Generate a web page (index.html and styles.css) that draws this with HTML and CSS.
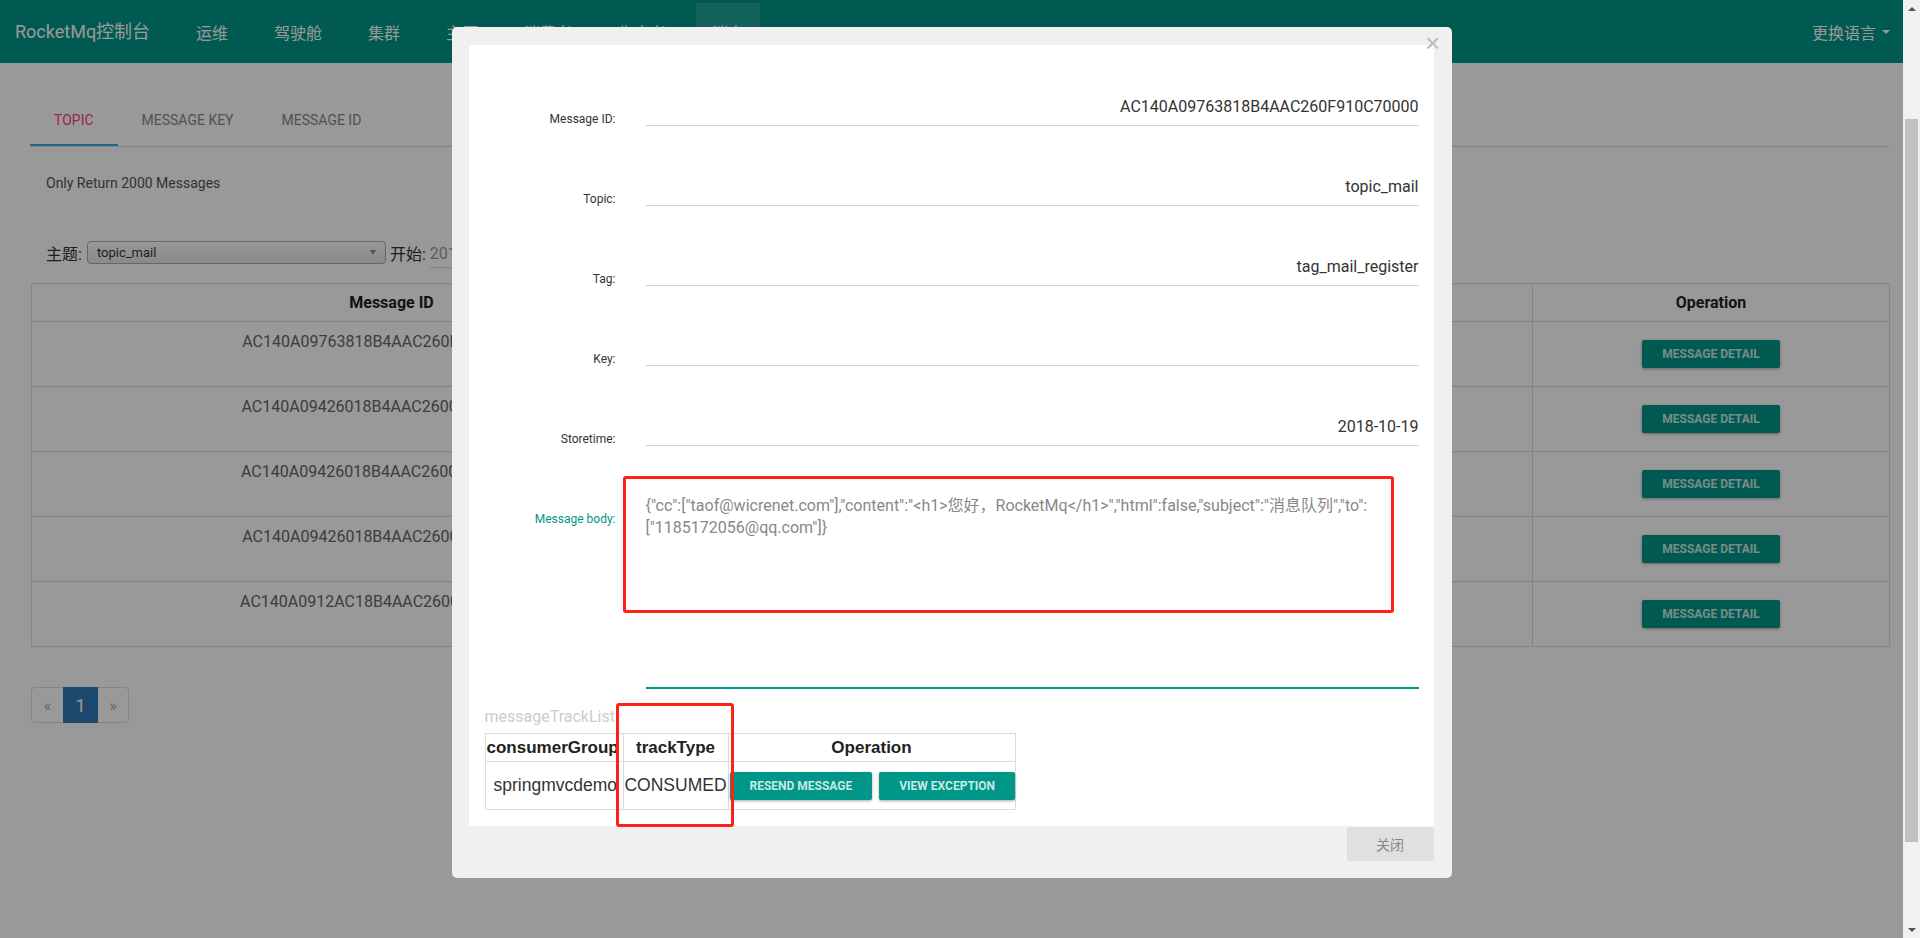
FILE: index.html
```html
<!DOCTYPE html>
<html lang="zh-CN">
<head>
<meta charset="utf-8">
<title>RocketMq控制台</title>
<link rel="stylesheet" href="styles.css">
</head>
<body>
<div class="screen">
  <div class="page">
    <nav class="navbar">
      <div class="brand">RocketMq控制台</div>
      <ul class="nav">
        <li>运维</li>
        <li>驾驶舱</li>
        <li>集群</li>
        <li>主题</li>
        <li>消费者</li>
        <li>生产者</li>
        <li class="active">消息</li>
      </ul>
      <div class="lang">更换语言<span class="caret"></span></div>
    </nav>

    <div class="content">
      <div class="tabs">
        <div class="tab active">Topic</div>
        <div class="tab">Message Key</div>
        <div class="tab">Message ID</div>
      </div>
      <p class="hint">Only Return 2000 Messages</p>
      <div class="search">
        <span class="lbl">主题:</span>
        <div class="select"><span>topic_mail</span><span class="sel-arrow"></span></div>
        <span class="lbl">开始:</span>
        <div class="date">2018-10-19 00:00:00</div>
      </div>

      <table class="msg-table">
        <colgroup>
          <col class="c-id"><col class="c-tag"><col class="c-key"><col class="c-time"><col class="c-op">
        </colgroup>
        <thead>
          <tr><th>Message ID</th><th>Tag</th><th>Message Key</th><th>StoreTime</th><th>Operation</th></tr>
        </thead>
        <tbody>
          <tr><td class="txt">AC140A09763818B4AAC260F910C70000</td><td class="txt">tag_mail_register</td><td class="txt"></td><td class="txt">2018-10-19 10:32:08</td><td class="op"><button class="btn">Message Detail</button></td></tr>
          <tr><td class="txt">AC140A09426018B4AAC2600A8C510000</td><td class="txt">tag_mail_register</td><td class="txt"></td><td class="txt">2018-10-19 09:58:41</td><td class="op"><button class="btn">Message Detail</button></td></tr>
          <tr><td class="txt">AC140A09426018B4AAC2600A8C2B0000</td><td class="txt">tag_mail_register</td><td class="txt"></td><td class="txt">2018-10-19 09:57:12</td><td class="op"><button class="btn">Message Detail</button></td></tr>
          <tr><td class="txt">AC140A09426018B4AAC2600A87F60000</td><td class="txt">tag_mail_register</td><td class="txt"></td><td class="txt">2018-10-19 09:55:30</td><td class="op"><button class="btn">Message Detail</button></td></tr>
          <tr><td class="txt">AC140A0912AC18B4AAC2600A73D10000</td><td class="txt">tag_mail_register</td><td class="txt"></td><td class="txt">2018-10-19 09:50:02</td><td class="op"><button class="btn">Message Detail</button></td></tr>
        </tbody>
      </table>

      <ul class="pagination">
        <li class="pg-prev">«</li>
        <li class="pg-num active">1</li>
        <li class="pg-next">»</li>
      </ul>
    </div>

    <div class="overlay">
      <div class="dialog">
        <div class="panel">
          <div class="form">
            <div class="row">
              <label>Message ID:</label>
              <div class="field"><div class="input">AC140A09763818B4AAC260F910C70000</div></div>
            </div>
            <div class="row">
              <label>Topic:</label>
              <div class="field"><div class="input">topic_mail</div></div>
            </div>
            <div class="row">
              <label>Tag:</label>
              <div class="field"><div class="input">tag_mail_register</div></div>
            </div>
            <div class="row">
              <label>Key:</label>
              <div class="field"><div class="input"></div></div>
            </div>
            <div class="row">
              <label>Storetime:</label>
              <div class="field"><div class="input">2018-10-19</div></div>
            </div>
            <div class="row">
              <label class="focus">Message body:</label>
              <div class="field"><div class="textarea">{"cc":["taof@wicrenet.com"],"content":"&lt;h1&gt;您好，RocketMq&lt;/h1&gt;","html":false,"subject":"消息队列","to":<br>["1185172056@qq.com"]}</div></div>
            </div>
          </div>

          <div class="track">
            <div class="track-title">messageTrackList</div>
            <table class="track-table">
              <colgroup><col class="t-group"><col class="t-type"><col class="t-op"></colgroup>
              <thead>
                <tr><th>consumerGroup</th><th>trackType</th><th>Operation</th></tr>
              </thead>
              <tbody>
                <tr>
                  <td class="group">springmvcdemo</td>
                  <td class="type">CONSUMED</td>
                  <td class="ops"><button class="btn btn-track">Resend Message</button><button class="btn btn-track">View Exception</button></td>
                </tr>
              </tbody>
            </table>
          </div>

          <div class="mark mark-body"></div>
          <div class="mark mark-track"></div>
        </div>
        <div class="dialog-footer"><button class="btn-close">关闭</button></div>
        <div class="dialog-x">×</div>
      </div>
    </div>
  </div>

  <div class="scrollbar">
    <div class="sb-btn"><span class="tri-up"></span></div>
    <div class="sb-track"><div class="sb-thumb"></div></div>
    <div class="sb-btn"><span class="tri-down"></span></div>
  </div>
</div>
</body>
</html>
```

FILE: styles.css
```css
* { box-sizing: border-box; }
html, body { margin: 0; padding: 0; }
body {
  font-family: Roboto, "Noto Sans CJK SC", sans-serif;
  color: #333;
}
.screen {
  display: flex;
  width: 1920px;
  height: 938px;
  overflow: hidden;
}
.page {
  position: relative;
  flex: none;
  width: 1903px;
  height: 938px;
  background: #fff;
  overflow: hidden;
}

/* navbar */
.navbar {
  display: flex;
  align-items: stretch;
  height: 63px;
  background: #009688;
  color: #fff;
}
.brand {
  width: 180px;
  padding-left: 15px;
  font-size: 18px;
  line-height: 63px;
  white-space: nowrap;
}
.nav {
  display: flex;
  list-style: none;
  margin: 0;
  padding: 0;
}
.nav li {
  display: flex;
  align-items: center;
  margin: 3px 14px 3px 0;
  padding: 0 16px;
  font-size: 16px;
}
.nav li.active { background: rgba(255, 255, 255, 0.12); }
.lang {
  margin-left: auto;
  padding-right: 13px;
  display: flex;
  align-items: center;
  gap: 6px;
  font-size: 16px;
}
.caret {
  width: 0;
  height: 0;
  border-left: 4px solid transparent;
  border-right: 4px solid transparent;
  border-top: 4px solid #fff;
}

/* content */
.content { padding: 0 14px 0 30px; }
.tabs {
  display: flex;
  margin-top: 34px;
  border-bottom: 1px solid #ddd;
}
.tab {
  height: 49px;
  padding: 0 24px;
  line-height: 47px;
  font-size: 14px;
  text-transform: uppercase;
  color: #888;
  border-bottom: 2px solid transparent;
}
.tab.active {
  color: #ff4081;
  border-bottom-color: #42a8e2;
}
.hint {
  margin: 27px 0 0 16px;
  font-size: 14px;
  line-height: 18px;
  color: #555;
}
.search {
  display: flex;
  align-items: center;
  height: 23px;
  margin: 49px 0 0 16px;
  font-size: 16px;
  color: #333;
}
.select {
  display: flex;
  align-items: center;
  justify-content: space-between;
  width: 299px;
  height: 23px;
  margin: 0 4px 0 5px;
  padding: 0 9px 0 9px;
  border: 1px solid #aaa;
  border-radius: 4px;
  background: linear-gradient(#fdfdfd, #e6e6e6);
  font-size: 13px;
  color: #333;
}
.sel-arrow {
  width: 0;
  height: 0;
  border-left: 3px solid transparent;
  border-right: 3px solid transparent;
  border-top: 5px solid #888;
}
.date {
  width: 400px;
  margin-left: 4px;
  border-bottom: 1px solid #ddd;
  color: #999;
  font-size: 16px;
  line-height: 25px;
  height: 27px;
  margin-top: 4px;
}

/* messages table */
.msg-table {
  width: 1858px;
  margin: 19px 0 0 1px;
  border-collapse: collapse;
  table-layout: fixed;
}
.c-id { width: 720px; }
.c-tag { width: 240px; }
.c-key { width: 160px; }
.c-time { width: 381px; }
.c-op { width: 357px; }
.msg-table th {
  height: 38px;
  border: 1px solid #ddd;
  font-size: 16px;
  font-weight: 700;
  color: #222;
  text-align: center;
  padding: 0 8px;
}
.msg-table td {
  height: 65px;
  border: 1px solid #ddd;
  text-align: center;
  padding: 0 8px;
}
.msg-table td.txt {
  vertical-align: top;
  padding-top: 9px;
  font-size: 16px;
  line-height: 22px;
  color: #666;
}
.msg-table td.op { vertical-align: middle; }
.btn {
  height: 28px;
  padding: 0 20px;
  border: none;
  border-radius: 2px;
  background: #009688;
  color: rgba(255, 255, 255, 0.8);
  font-family: Roboto, sans-serif;
  font-size: 12px;
  font-weight: 700;
  text-transform: uppercase;
  box-shadow: 0 1px 3px rgba(0, 0, 0, 0.35);
  white-space: nowrap;
}

.pagination {
  display: flex;
  list-style: none;
  margin: 40px 0 0 1px;
  padding: 0;
}
.pagination li {
  display: flex;
  align-items: center;
  justify-content: center;
  height: 36px;
  border: 1px solid #ddd;
  font-size: 16px;
  color: #aaa;
}
.pg-prev { width: 32px; border-radius: 4px 0 0 4px; border-right: none !important; }
.pg-num { width: 35px; }
.pg-next { width: 31px; border-radius: 0 4px 4px 0; border-left: none !important; }
.pagination li.active {
  background: #337ab7;
  border-color: #337ab7;
  color: #fff;
  font-size: 18px;
}

/* overlay + dialog */
.overlay {
  position: absolute;
  inset: 0;
  display: flex;
  justify-content: center;
  align-items: flex-start;
  padding-top: 27px;
  background: rgba(0, 0, 0, 0.4);
}
.dialog {
  position: relative;
  width: 1000px;
  padding: 18px 18px 17px 17px;
  background: #f0f0f0;
  border-radius: 5px;
}
.panel {
  position: relative;
  height: 781px;
  background: #fff;
}
.form { padding-top: 1px; }
.row {
  display: grid;
  grid-template-columns: 162px 1fr;
  margin-top: 42px;
}
.row label {
  padding: 24px 15px 0 0;
  text-align: right;
  font-size: 12px;
  line-height: 14px;
  color: #333;
}
.row label.focus { color: #009688; }
.field { padding: 0 15px; }
.input {
  height: 38px;
  border-bottom: 1px solid #d2d2d2;
  text-align: right;
  font-size: 16px;
  line-height: 37px;
  color: #333;
  white-space: nowrap;
}
.textarea {
  height: 201px;
  padding-top: 7px;
  border-bottom: 2px solid #009688;
  font-size: 16px;
  line-height: 22px;
  color: #888;
  white-space: nowrap;
}

.track { padding-left: 16px; margin-top: 17px; }
.track-title {
  font-size: 16px;
  line-height: 22px;
  color: #ccc;
}
.track-table {
  width: 530px;
  margin-top: 5px;
  border-collapse: collapse;
  table-layout: fixed;
}
.t-group { width: 138px; }
.t-type { width: 105px; }
.t-op { width: 287px; }
.track-table th {
  height: 28px;
  padding: 0 1px;
  border: 1px solid #ddd;
  font-family: "Liberation Sans", Arial, sans-serif;
  font-size: 17px;
  font-weight: 700;
  color: #222;
  text-align: center;
  white-space: nowrap;
  overflow: hidden;
}
.track-table th:first-child { text-align: left; }
.track-table td {
  height: 48px;
  border: 1px solid #ddd;
  font-family: "Liberation Sans", Arial, sans-serif;
  font-size: 17.5px;
  color: #333;
  white-space: nowrap;
  overflow: hidden;
}
.track-table td.group { text-align: left; padding: 0 0 0 8px; }
.track-table td.type { text-align: center; padding: 0; }
.track-table td.ops {
  padding: 0 1px;
  overflow: visible;
}
.btn-track { margin-right: 7px; color: rgba(255, 255, 255, 0.8); }
.btn-track:last-child { margin-right: 0; }

.mark {
  position: absolute;
  border: 3px solid #fe2015;
  border-radius: 3px;
}
.mark-body { left: 154px; top: 431px; width: 771px; height: 137px; }
.mark-track { left: 147px; top: 658px; width: 118px; height: 124px; }

.dialog-footer {
  display: flex;
  justify-content: flex-end;
  margin-top: 1px;
}
.btn-close {
  width: 87px;
  height: 34px;
  border: none;
  border-radius: 3px;
  background: #e0e0e0;
  color: #888;
  font-family: "Noto Sans CJK SC", sans-serif;
  font-size: 14px;
}
.dialog-x {
  position: absolute;
  left: 971px;
  top: 4px;
  width: 20px;
  height: 24px;
  font-family: "Liberation Sans", Arial, sans-serif;
  font-size: 26px;
  line-height: 24px;
  text-align: center;
  color: #bbb;
}

/* scrollbar */
.scrollbar {
  flex: none;
  display: flex;
  flex-direction: column;
  width: 17px;
  height: 938px;
  background: #f1f1f1;
}
.sb-btn {
  display: flex;
  align-items: center;
  justify-content: center;
  height: 17px;
}
.sb-track {
  flex: 1;
  padding: 102px 2px 0 2px;
}
.sb-thumb {
  height: 723px;
  background: #c1c1c1;
}
.tri-up, .tri-down {
  width: 0;
  height: 0;
  border-left: 4px solid transparent;
  border-right: 4px solid transparent;
}
.tri-up { border-bottom: 4px solid #505050; }
.tri-down { border-top: 4px solid #505050; }
```
